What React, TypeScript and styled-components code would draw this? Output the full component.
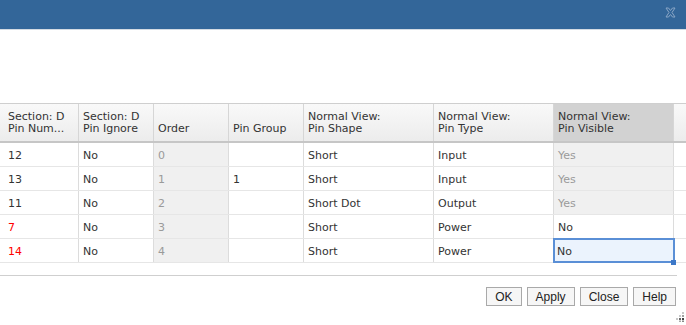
import React from "react";
import styled, { createGlobalStyle } from "styled-components";

const GlobalStyle = createGlobalStyle`
  html, body {
    margin: 0;
    padding: 0;
    background: #ffffff;
  }
`;

interface PinRow {
  num: string;
  numError?: boolean;
  ignore: string;
  order: string;
  group: string;
  shape: string;
  type: string;
  visible: string;
  locked: boolean;
}

const rows: PinRow[] = [
  { num: "12", ignore: "No", order: "0", group: "", shape: "Short", type: "Input", visible: "Yes", locked: true },
  { num: "13", ignore: "No", order: "1", group: "1", shape: "Short", type: "Input", visible: "Yes", locked: true },
  { num: "11", ignore: "No", order: "2", group: "", shape: "Short Dot", type: "Output", visible: "Yes", locked: true },
  { num: "7", numError: true, ignore: "No", order: "3", group: "", shape: "Short", type: "Power", visible: "No", locked: false },
  { num: "14", numError: true, ignore: "No", order: "4", group: "", shape: "Short", type: "Power", visible: "No", locked: false },
];

const COLS = "4px 75px 75px 75px 75px 130px 120px 120px 1fr";

export default function App() {
  return (
    <Dialog>
      <GlobalStyle />
      <TitleBar>
        <CloseIcon width="11" height="11" viewBox="0 0 11 11">
          <path
            d="M1 1 L3.5 1 L5.5 3.5 L7.5 1 L10 1 L7 5.5 L10 10 L7.5 10 L5.5 7.5 L3.5 10 L1 10 L4 5.5 Z"
            fill="none"
            stroke="#8aa6c6"
            strokeWidth="1"
          />
        </CloseIcon>
      </TitleBar>

      <Grid>
        <HeaderRow>
          <HeadCell />
          <HeadCell>Section: D<br />Pin Num...</HeadCell>
          <HeadCell>Section: D<br />Pin Ignore</HeadCell>
          <HeadCell>Order</HeadCell>
          <HeadCell>Pin Group</HeadCell>
          <HeadCell>Normal View:<br />Pin Shape</HeadCell>
          <HeadCell>Normal View:<br />Pin Type</HeadCell>
          <HeadCell $active>Normal View:<br />Pin Visible</HeadCell>
          <HeadCell $last />
        </HeaderRow>
        {rows.map((r, i) => (
          <Row key={i}>
            <Cell />
            <Cell $error={r.numError}>{r.num}</Cell>
            <Cell>{r.ignore}</Cell>
            <Cell $readonly>{r.order}</Cell>
            <Cell>{r.group}</Cell>
            <Cell>{r.shape}</Cell>
            <Cell>{r.type}</Cell>
            <Cell $readonly={r.locked} $selected={i === rows.length - 1}>
              {r.visible}
              {i === rows.length - 1 && <FillHandle />}
            </Cell>
            <Blank />
          </Row>
        ))}
      </Grid>

      <Footer>
        <Button>OK</Button>
        <Button>Apply</Button>
        <Button>Close</Button>
        <Button>Help</Button>
      </Footer>

      <Grip width="9" height="10" viewBox="0 0 9 10">
        <rect x="7" y="0" width="2" height="2" fill="#c8c8c8" />
        <rect x="7" y="3" width="2" height="2" fill="#a0a0a0" />
        <rect x="4" y="3" width="2" height="2" fill="#c8c8c8" />
        <rect x="7" y="6" width="2" height="2" fill="#444" />
        <rect x="4" y="6" width="2" height="2" fill="#666" />
        <rect x="1" y="6" width="2" height="2" fill="#c8c8c8" />
        <rect x="7" y="8.5" width="2" height="1.5" fill="#888" />
        <rect x="4" y="8.5" width="2" height="1.5" fill="#aaa" />
      </Grip>
    </Dialog>
  );
}

const Dialog = styled.div`
  position: relative;
  width: 686px;
  height: 325px;
  overflow: hidden;
  background: #fff;
  display: flex;
  flex-direction: column;
  font-family: "DejaVu Sans", Verdana, sans-serif;
`;

const TitleBar = styled.div`
  height: 29px;
  flex-shrink: 0;
  background: #336699;
  border-bottom: 1px solid #d4dbe3;
  display: flex;
  align-items: flex-start;
  justify-content: flex-end;
  padding-right: 10px;
`;

const CloseIcon = styled.svg`
  margin-top: 7px;
`;

const Grid = styled.div`
  margin-top: 73px;
  display: flex;
  flex-direction: column;
  border-bottom: 1px solid #fff;
`;

const HeaderRow = styled.div`
  display: grid;
  grid-template-columns: ${COLS};
  border-top: 1px solid #cfcfcf;
  border-bottom: 2px solid #c6c6c6;
  height: 37px;
`;

const HeadCell = styled.div<{ $active?: boolean; $last?: boolean }>`
  display: flex;
  flex-direction: column;
  justify-content: flex-end;
  padding: 0 0 6px 4px;
  font-size: 11px;
  line-height: 12px;
  color: #333;
  white-space: nowrap;
  overflow: hidden;
  background: ${(p) =>
    p.$active
      ? "#d2d2d2"
      : "linear-gradient(#f9f9f9, #ececec)"};
  border-right: ${(p) => (p.$last ? "none" : "1px solid #d6d6d6")};
  box-sizing: border-box;
`;

const Row = styled.div`
  display: grid;
  grid-template-columns: ${COLS};
  height: 24px;
  box-sizing: border-box;
  border-bottom: 1px solid #e6e6e6;
`;

const Cell = styled.div<{ $readonly?: boolean; $error?: boolean; $selected?: boolean }>`
  position: relative;
  display: flex;
  align-items: center;
  padding: 2px 0 0 4px;
  font-size: 11px;
  box-sizing: border-box;
  color: ${(p) => (p.$error ? "#ff0000" : p.$readonly ? "#9a9a9a" : "#333")};
  background: ${(p) => (p.$selected ? "#ebf3fd" : p.$readonly ? "#f0f0f0" : "#fff")};
  border-right: 1px solid #dcdcdc;
  ${(p) =>
    p.$selected &&
    `
    outline: 2px solid #5a8fd6;
    outline-offset: -1px;
    padding-left: 3px;
  `}
`;

const Blank = styled.div`
  background: #fff;
`;

const FillHandle = styled.span`
  position: absolute;
  right: -3px;
  bottom: -3px;
  width: 5px;
  height: 5px;
  background: #3c78c8;
`;

const Footer = styled.div`
  margin-top: 11px;
  margin-right: 9px;
  border-top: 1px solid #cfcfcf;
  padding: 11px 1px 0 0;
  display: flex;
  justify-content: flex-end;
  gap: 5px;
`;

const Button = styled.button`
  height: 19px;
  padding: 0 8px;
  font-family: "Liberation Sans", Arial, sans-serif;
  font-size: 12px;
  color: #222;
  background: #f6f6f6;
  border: 1px solid #a9a9a9;
  border-radius: 0;
  cursor: pointer;
`;

const Grip = styled.svg`
  position: absolute;
  right: 2px;
  bottom: 3px;
`;
